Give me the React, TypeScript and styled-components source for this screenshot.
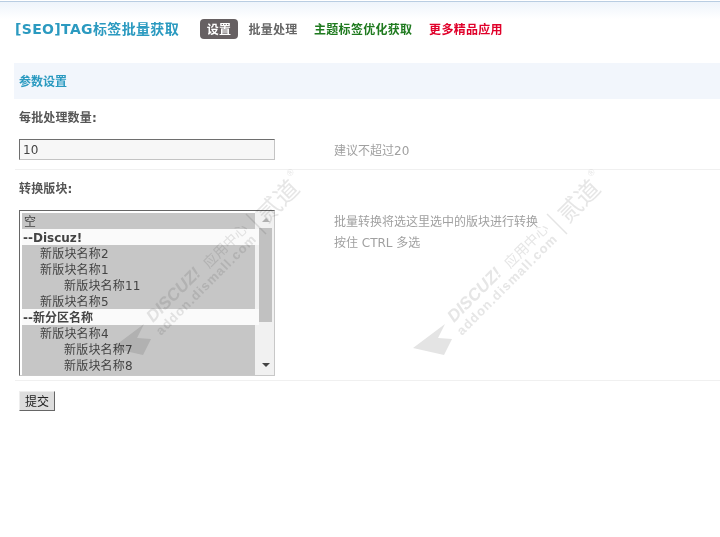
import React from "react";
import styled, { createGlobalStyle } from "styled-components";

const Global = createGlobalStyle`
  html, body { margin: 0; padding: 0; background: #fff; }
  body { font: 12px/1.5 "DejaVu Sans", "Noto Sans CJK SC", sans-serif; color: #666; }
`;

const Page = styled.div`
  position: relative;
  width: 720px;
  height: 537px;
  overflow: hidden;
  box-sizing: border-box;
  border-top: 1px solid #fff;
`;
const TopLine = styled.div`
  height: 17px;
  border-top: 1px solid #b9cde2;
  background: linear-gradient(#eef4fb, #fff);
`;
const Header = styled.header`
  display: flex;
  align-items: center;
  height: 20px;
  padding-left: 15px;
  margin-bottom: 24px;
`;
const Title = styled.h1`
  margin: 0 20px 0 0;
  width: 165px;
  font-size: 14px;
  line-height: 20px;
  font-weight: 700;
  color: #2b9ac0;
  white-space: nowrap;
  letter-spacing: 0.35px;
`;
const Tab = styled.a<{ $color?: string; $active?: boolean; $width: number }>`
  display: block;
  box-sizing: border-box;
  width: ${(p) => p.$width}px;
  height: 20px;
  line-height: 22px;
  border-radius: 4px;
  text-align: center;
  font-weight: 700;
  font-size: 12px;
  letter-spacing: 0.3px;
  white-space: nowrap;
  color: ${(p) => (p.$active ? "#fff" : p.$color || "#666")};
  background: ${(p) => (p.$active ? "#666062" : "transparent")};
`;
const TabRow = styled.nav`
  display: flex;
  gap: 10px;
  & > a:nth-child(3) { margin-left: 6px; }
  & > a:nth-child(4) { margin-left: 7px; }
`;
const SectionBar = styled.h2`
  margin: 0 0 0 14px;
  height: 36px;
  line-height: 38px;
  padding-left: 5px;
  background: #f2f6fc;
  font-size: 12px;
  font-weight: 700;
  color: #2b9ac0;
`;
const FieldLabel = styled.div`
  height: 18px;
  line-height: 18px;
  margin: 10px 0 0 19px;
  font-weight: 700;
  color: #555;
  letter-spacing: 0.15px;
`;
const Row = styled.div<{ $height: number }>`
  display: grid;
  grid-template-columns: 256px 1fr;
  column-gap: 59px;
  height: ${(p) => p.$height}px;
  margin-left: 15px;
  padding-left: 4px;
  border-bottom: 1px solid #f0f0f0;
`;
const TextInput = styled.input`
  box-sizing: border-box;
  width: 256px;
  height: 21px;
  margin: 12px 0 0;
  padding: 0 3px;
  border: 1px solid #c4c4c4;
  border-top-color: #6e6e6e;
  border-left-color: #6e6e6e;
  background: #f7f7f7;
  font: 12px "DejaVu Sans", sans-serif;
  color: #444;
  outline: none;
`;
const Tip = styled.div`
  margin-top: 14px;
  font-size: 12px;
  line-height: 20px;
  color: #a0a0a0;
`;
const WideTip = styled(Tip)`
  line-height: 21px;
`;
const ListBox = styled.div`
  box-sizing: border-box;
  display: flex;
  width: 256px;
  height: 166px;
  margin-top: 12px;
  border: 1px solid #c8c8c8;
  border-top-color: #666;
  border-left-color: #666;
  background: #fff;
  overflow: hidden;
`;
const Options = styled.div`
  flex: 1;
  padding: 2px 0 0 2px;
  min-width: 0;
  position: relative;
  z-index: 1;
`;
const Option = styled.div<{ $depth?: number; $group?: boolean }>`
  height: 16px;
  line-height: 18px;
  overflow: visible;
  font-size: 12px;
  white-space: nowrap;
  padding-left: ${(p) => (p.$group ? 1 : 2 + (p.$depth || 0) * 8)}px;
  margin-right: ${(p) => (p.$group ? -4 : 0)}px;
  font-weight: ${(p) => (p.$group ? 700 : 400)};
  letter-spacing: ${(p) => (p.$group ? 0 : 0.2)}px;
  color: #444;
  background: ${(p) => (p.$group ? "#fafafa" : "#c6c6c6")};
`;
const ScrollTrack = styled.div`
  display: flex;
  flex-direction: column;
  align-items: center;
  box-sizing: border-box;
  width: 19px;
  padding-left: 2px;
  background: #f1f1f1;
`;
const ScrollArrow = styled.div<{ $down?: boolean }>`
  width: 0;
  height: 0;
  margin: ${(p) => (p.$down ? "auto 0 8px" : "7px 0 6px")};
  border-left: 4px solid transparent;
  border-right: 4px solid transparent;
  ${(p) =>
    p.$down ? "border-top: 4px solid #444;" : "border-bottom: 4px solid #b0b0b0;"}
`;
const ScrollThumb = styled.div`
  width: 13px;
  height: 94px;
  background: #c1c1c1;
`;
const Submit = styled.button`
  display: block;
  box-sizing: border-box;
  width: 36px;
  height: 20px;
  margin: 10px 0 0 19px;
  padding: 1px 0 0;
  border: 1px solid;
  border-color: #eee #666 #666 #eee;
  background: #ddd;
  font: 12px/16px "DejaVu Sans", "Noto Sans CJK SC", sans-serif;
  color: #222;
`;
const Mark = styled.svg<{ $left: number }>`
  position: absolute;
  top: 164px;
  left: ${(p) => p.$left}px;
  pointer-events: none;
  mix-blend-mode: multiply;
  z-index: 2;
`;

const Watermark = ({ left }: { left: number }) => (
  <Mark $left={left} width="200" height="195" viewBox="0 0 200 195" aria-hidden="true">
    <polygon points="3,183 35,159 28,173 42,174 34,190" fill="#e4e4e4" />
    <g fill="#e6e6e6" fontFamily='"Liberation Sans", "Noto Sans CJK SC", sans-serif'>
      <text transform="translate(44,158) rotate(-45)" fontSize="17" fontWeight="700" fontStyle="italic">DISCUZ!</text>
      <text transform="translate(100,104) rotate(-45)" fontSize="14">应用中心</text>
      <text transform="translate(52,171) rotate(-45)" fontSize="13" fontWeight="700" letterSpacing="1.1">addon.dismall.com</text>
      <text transform="translate(158,59) rotate(-45)" fontSize="24">贰道</text>
      <text transform="translate(181,12) rotate(-45)" fontSize="9">®</text>
    </g>
    <line x1="137" y1="49" x2="157" y2="69" stroke="#e4e4e4" strokeWidth="1.5" />
  </Mark>
);

const forums: { id: string; text: string; depth?: number; group?: boolean }[] = [
  { id: "a", text: "空" },
  { id: "b", text: "--Discuz!", group: true },
  { id: "c", text: "新版块名称2", depth: 2 },
  { id: "d", text: "新版块名称1", depth: 2 },
  { id: "e", text: "新版块名称11", depth: 5 },
  { id: "f", text: "新版块名称5", depth: 2 },
  { id: "g", text: "--新分区名称", group: true },
  { id: "h", text: "新版块名称4", depth: 2 },
  { id: "i", text: "新版块名称7", depth: 5 },
  { id: "j", text: "新版块名称8", depth: 5 },
  { id: "k", text: "" },
];

export default function App() {
  return (
    <Page>
      <Global />
      <TopLine />
      <Header>
        <Title>[SEO]TAG标签批量获取</Title>
        <TabRow>
          <Tab $active $width={38}>设置</Tab>
          <Tab $width={50}>批量处理</Tab>
          <Tab $width={98} $color="#1f7a1f">主题标签优化获取</Tab>
          <Tab $width={74} $color="#e0002a">更多精品应用</Tab>
        </TabRow>
      </Header>
      <SectionBar>参数设置</SectionBar>
      <FieldLabel>每批处理数量:</FieldLabel>
      <Row $height={42}>
        <TextInput defaultValue="10" />
        <Tip>建议不超过20</Tip>
      </Row>
      <FieldLabel>转换版块:</FieldLabel>
      <Row $height={182}>
        <ListBox role="listbox">
          <Options>
            {forums.map((f) => (
              <Option key={f.id} $depth={f.depth} $group={f.group}>{f.text}</Option>
            ))}
          </Options>
          <ScrollTrack>
            <ScrollArrow />
            <ScrollThumb />
            <ScrollArrow $down />
          </ScrollTrack>
        </ListBox>
        <WideTip>
          批量转换将选这里选中的版块进行转换
          <br />
          按住 CTRL 多选
        </WideTip>
      </Row>
      <Submit type="button">提交</Submit>
      <Watermark left={109} />
      <Watermark left={410} />
    </Page>
  );
}
